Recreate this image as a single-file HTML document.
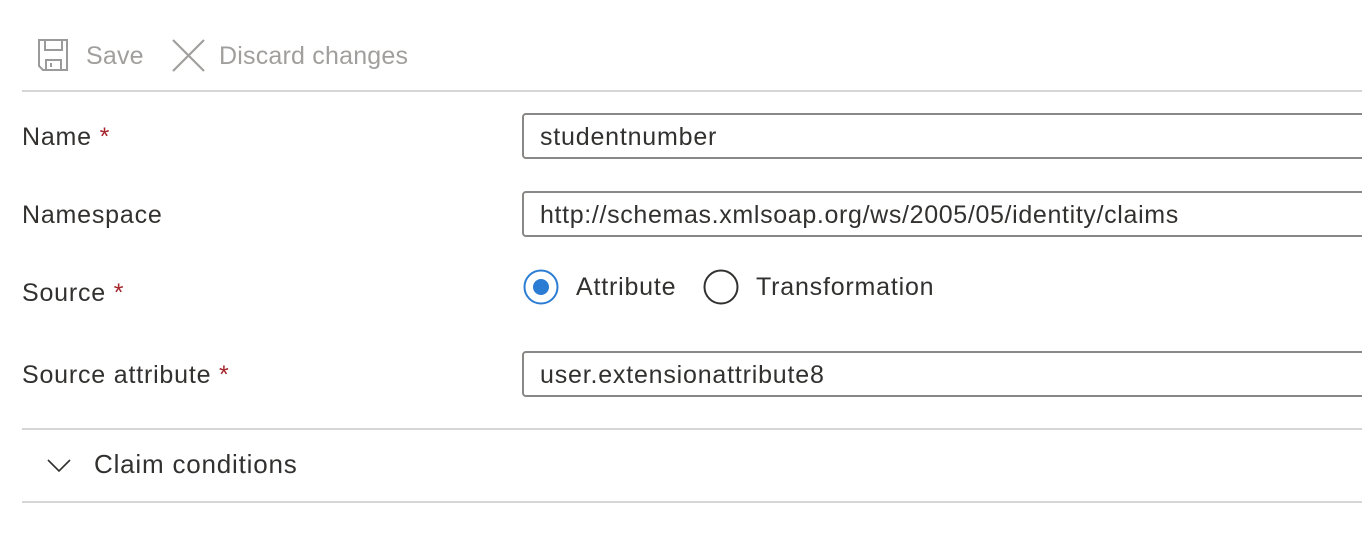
<!DOCTYPE html>
<html><head><style>
body{margin:0;width:1362px;height:542px;background:#fff;position:relative;overflow:hidden;font-family:"Liberation Sans",sans-serif;color:#323130}
.a{position:absolute;white-space:nowrap;font-size:25px;letter-spacing:0.8px}
.lbl{color:#323130;left:22px}
.req{color:#a4262c}
.inp{position:absolute;left:522px;width:900px;height:42px;border:2px solid #8a8886;border-radius:4px;box-sizing:content-box}
.inp span{position:absolute;left:16px;top:8px;font-size:25px;letter-spacing:0.8px;color:#323130;white-space:nowrap}
.hr{position:absolute;left:22px;right:0;height:2px;background:#d6d6d6}
</style></head><body>
<svg class="a" style="left:37px;top:38px" width="34" height="34" viewBox="0 0 34 34" fill="none" stroke="#9a9a9a" stroke-width="2"><path d="M2 2H30V32H6L2 28Z"/><path d="M8 2V12H25V2"/><path d="M9 32V22H24V32"/><path d="M14 25V29"/></svg>
<div class="a" style="left:86px;top:42px;color:#a19f9d;letter-spacing:0.2px">Save</div>
<svg class="a" style="left:172px;top:39px" width="33" height="33" viewBox="0 0 33 33" stroke="#a19f9d" stroke-width="2.2"><path d="M1 1L32 32M32 1L1 32"/></svg>
<div class="a" style="left:219px;top:42px;color:#a19f9d;letter-spacing:0.2px">Discard changes</div>
<div class="hr" style="top:90px"></div>

<div class="a lbl" style="top:123px">Name <span class="req">*</span></div>
<div class="inp" style="top:113px"><span>studentnumber</span></div>

<div class="a lbl" style="top:201px">Namespace</div>
<div class="inp" style="top:191px"><span style="letter-spacing:0.65px">http://schemas.xmlsoap.org/ws/2005/05/identity/claims</span></div>

<div class="a lbl" style="top:279px">Source <span class="req">*</span></div>
<svg class="a" style="left:523px;top:269px" width="36" height="36"><circle cx="18" cy="18" r="16.5" fill="none" stroke="#2b7cd3" stroke-width="2"/><circle cx="18" cy="18" r="8" fill="#2b7cd3"/></svg>
<div class="a" style="left:576px;top:273px">Attribute</div>
<svg class="a" style="left:703px;top:269px" width="36" height="36"><circle cx="18" cy="18" r="16.5" fill="none" stroke="#323130" stroke-width="2"/></svg>
<div class="a" style="left:756px;top:273px">Transformation</div>

<div class="a lbl" style="top:361px">Source attribute <span class="req">*</span></div>
<div class="inp" style="top:351px"><span>user.extensionattribute8</span></div>

<div class="hr" style="top:428px"></div>
<svg class="a" style="left:46px;top:456px" width="26" height="18" viewBox="0 0 26 18" fill="none" stroke="#323130" stroke-width="1.6"><path d="M2 4L13 15L24 4"/></svg>
<div class="a" style="left:94px;top:449px;font-size:26px">Claim conditions</div>
<div class="hr" style="top:501px"></div>
</body></html>
